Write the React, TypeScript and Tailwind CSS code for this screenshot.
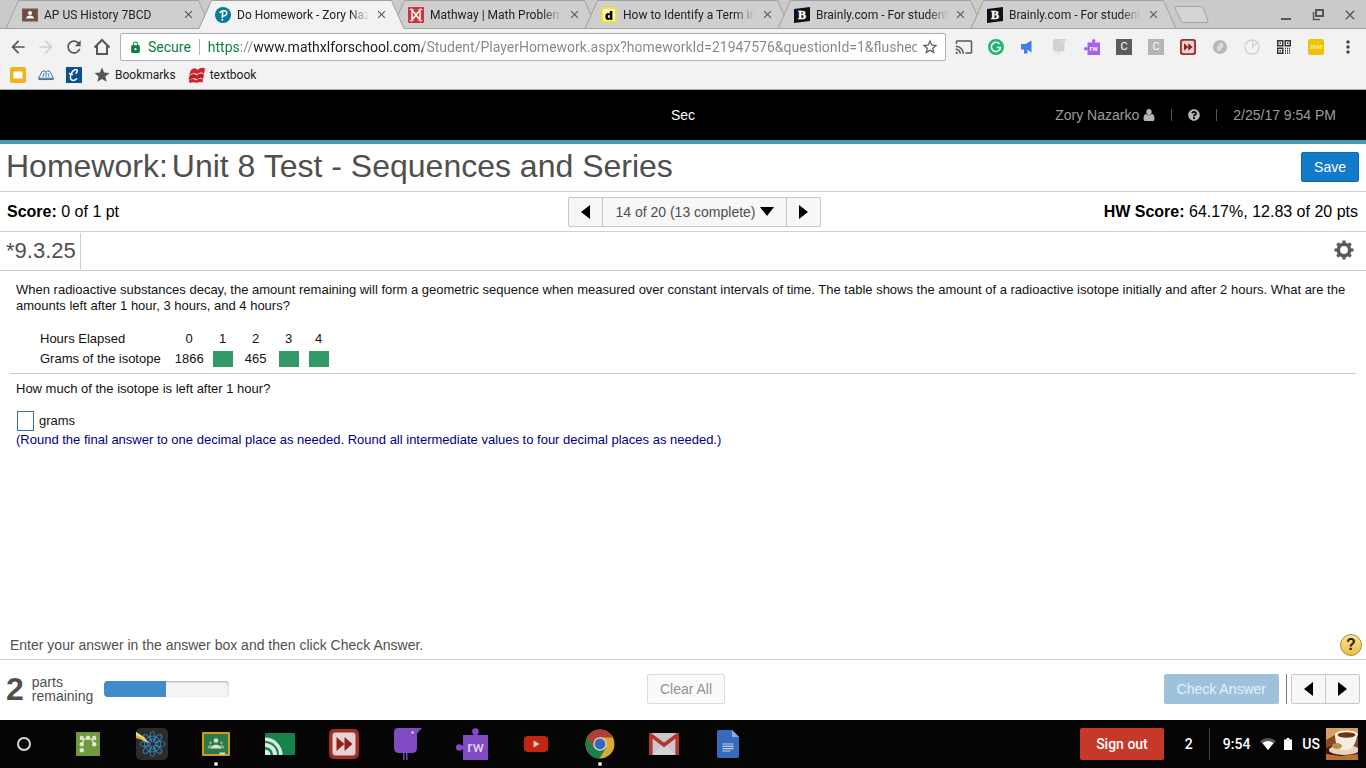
import React, { useState } from 'react';
import {
    MdArrowBack,
    MdArrowForward,
    MdCast,
    MdClose,
    MdLock,
    MdMoreVert,
    MdRefresh,
    MdStar,
    MdStarBorder,
} from 'react-icons/md';
import { FaQuestionCircle } from 'react-icons/fa';

interface Tab {
    id: number;
    title: string;
    icon: React.ReactNode;
}

interface IconItem {
    label: string;
    icon: React.ReactNode;
    running?: boolean;
}

/* ---------- favicons ---------- */

const ClassIcon = () => (
    <svg viewBox="0 0 16 16" className="size-4">
        <rect x="0" y="1.5" width="16" height="13" fill="#795548" />
        <rect x="1.5" y="3" width="13" height="10" fill="#6d4c41" />
        <circle cx="8" cy="6" r="2" fill="#fff" />
        <path d="M4 11.5c0-4 8-4 8 0z" fill="#fff" />
    </svg>
);

const PearsonIcon = () => (
    <svg viewBox="0 0 16 16" className="size-4">
        <circle cx="8" cy="8" r="8" fill="#047a9c" />
        <path d="M4.8 6c1.2-3 7-3.200 7-.2 0 2.500-2.600 3.600-4.400 3" fill="none" stroke="#fff" strokeWidth="1.500" />
        <path d="M7.600 4.500l-.3 6.500" fill="none" stroke="#fff" strokeWidth="1.600" />
        <circle cx="7.300" cy="12.700" r="1" fill="#fff" />
    </svg>
);

const MathwayIcon = () => (
    <svg viewBox="0 0 16 16" className="size-4">
        <rect width="16" height="16" rx="1" fill="#d0343c" />
        <path d="M4 13V3l4 5 4-5v10L8 8z" fill="none" stroke="#fff" strokeWidth="1.500" />
        <path d="M1.500 2.500h4M10.500 2.500h4M1.500 13.500h4M10.500 13.500h4" stroke="#f5c9cb" strokeWidth="1" />
    </svg>
);

const DummiesIcon = () => (
    <span className="flex size-4 items-center justify-center rounded-xs border-2 border-[#efe23c] bg-[#fdf9b8] font-['Open_Sans'] text-[13px]/[12px] font-extrabold text-black">
        d
    </span>
);

const BrainlyIcon = () => (
    <svg viewBox="0 0 16 16" className="size-4">
        <path d="M0 2l16-2v14L0 16z" fill="#111" />
        <text x="8" y="12.300" textAnchor="middle" fontSize="12" fontWeight="700" fontFamily="Liberation Serif" fill="#fff" stroke="#fff" strokeWidth=".4">B</text>
    </svg>
);

/* ---------- toolbar icons ---------- */

const HomeIcon = () => (
    <svg viewBox="0 0 18 18" className="size-[18px]" fill="none" stroke="#555" strokeWidth="2">
        <path d="M1.500 9.500L9 2l7.500 7.500M4 8v8h10V8" strokeLinejoin="miter" />
    </svg>
);

const FastForwardIcon = ({ className }: { className: string }) => (
    <svg viewBox="0 0 30 30" className={className}>
        <rect width="30" height="30" rx="5" fill="#a32c27" />
        <rect x="3.500" y="3.500" width="23" height="23" rx="3" fill="#e2d5d4" />
        <path d="M7.500 8l8 7-8 7zM15.500 8l8 7-8 7z" fill="#93201c" />
    </svg>
);

const PuzzleIcon = ({ className, fill, text }: { className: string; fill: string; text: string }) => (
    <svg viewBox="0 0 32 32" className={className} fill={fill}>
        <rect x="7" y="7" width="25" height="25" />
        <circle cx="19.500" cy="3.500" r="3.300" />
        <rect x="17.500" y="4" width="4" height="5" />
        <circle cx="3.300" cy="19.500" r="3.300" />
        <rect x="4" y="17.500" width="5" height="4" />
        <text x="19.500" y="23.500" textAnchor="middle" fontSize="15" fontWeight="500" fontFamily="Roboto" fill={text}>rw</text>
    </svg>
);

const BirdIcon = ({ className, fill }: { className: string; fill: string }) => (
    <svg viewBox="0 0 32 32" className={className} fill={fill}>
        <path d="M6 0h24l-5 5.500V20q0 5-5 5H7q-5 0-5-5V4Q2 0 6 0z" />
        <path d="M11.800 25v7M14.800 25v7" stroke={fill} strokeWidth="1.400" />
        <circle cx="20.500" cy="4.500" r="1.300" fill="#fff" opacity=".75" />
    </svg>
);

const QrIcon = () => (
    <svg viewBox="0 0 14 14" className="size-3.5" fill="none" stroke="#333" strokeWidth="1.500">
        <rect x=".75" y=".75" width="5" height="5" />
        <rect x="8.250" y=".75" width="5" height="5" />
        <rect x=".75" y="8.250" width="5" height="5" />
        <path d="M2.500 3.250h1.500M10 3.250h1.500M2.500 10.750h1.500" />
        <path d="M8 8.500h6M8 10.750h6M8 13h6" strokeDasharray="1 1" />
    </svg>
);

const LetterIcon = ({ className }: { className: string }) => (
    <span className={`flex size-4 items-center justify-center text-[11px] text-white ${className}`}>C</span>
);

const UserIcon = () => (
    <svg viewBox="0 0 12 12" className="size-3" fill="#b5b5b5">
        <ellipse cx="6" cy="3" rx="2.700" ry="3" />
        <path d="M3 5q3 2.500 6 0 2.500.500 2.500 5 0 2-1.500 2H2Q.500 12 .500 10 .500 5.500 3 5z" />
    </svg>
);

const EXTENSIONS: IconItem[] = [
    { label: 'Cast', icon: <MdCast size={18} color="#5a5a5a" /> },
    {
        label: 'Grammarly',
        icon: (
            <svg viewBox="0 0 16 16" className="size-4">
                <circle cx="8" cy="8" r="8" fill="#21b573" />
                <path d="M11.500 5A4.600 4.600 0 1 0 12.500 8.500H9" fill="none" stroke="#fff" strokeWidth="1.500" />
                <path d="M12 8v3" stroke="#fff" strokeWidth="1.300" />
            </svg>
        ),
    },
    {
        label: 'Announce',
        icon: (
            <svg viewBox="0 0 16 16" className="size-4" fill="#3f7fe8">
                <path d="M1 5h4.500L11.500 1.500v12L7.500 10.500v4H4V10.500H1z" />
            </svg>
        ),
    },
    { label: 'Bird', icon: <BirdIcon className="size-4" fill="#d2d2d2" /> },
    { label: 'Read and write', icon: <PuzzleIcon className="size-4" fill="#a561ef" text="#fff" /> },
    { label: 'Clever', icon: <LetterIcon className="bg-[#5c5c5c]" /> },
    { label: 'Clip', icon: <LetterIcon className="bg-[#b5b5b5]" /> },
    { label: 'Skip ads', icon: <FastForwardIcon className="size-4" /> },
    {
        label: 'Leaf',
        icon: (
            <svg viewBox="0 0 16 16" className="size-4">
                <circle cx="8" cy="8" r="7" fill="#b8b8b8" />
                <path d="M5 9l4-5 2 2-4 6zM7 12l4-5" fill="#d8d8d8" stroke="#e3e3e3" />
            </svg>
        ),
    },
    {
        label: 'Timer',
        icon: (
            <svg viewBox="0 0 16 16" className="size-4" fill="none" stroke="#cfcfcf">
                <circle cx="8" cy="8" r="7" strokeWidth="1.300" />
                <path d="M8.500 1.500V8l4.500-4.500" strokeWidth="1.200" />
            </svg>
        ),
    },
    { label: 'QR code', icon: <QrIcon /> },
    {
        label: '2048',
        icon: (
            <span className="flex size-4 items-center justify-center rounded-xs bg-[#ecc30b] font-[Roboto]">
                <svg viewBox="0 0 16 16" className="size-4">
                    <text x="8" y="10" textAnchor="middle" fontSize="5.500" fontWeight="700" fill="#fbeea6">2048</text>
                </svg>
            </span>
        ),
    },
];

/* ---------- shelf icons ---------- */

const SHELF: IconItem[] = [
    {
        label: 'Desmos',
        icon: (
            <svg viewBox="0 0 24 24" className="size-6">
                <rect width="24" height="24" rx="1" fill="#6f9a3c" />
                <path d="M5.800 12.200Q8 6 12 5.800q4 .2 6.200 6.400" fill="none" stroke="#dfe6d3" strokeWidth="1.300" />
                <g fill="#dfe6d3">
                    <circle cx="5.800" cy="6" r="2.200" />
                    <circle cx="12" cy="5.800" r="2.200" />
                    <circle cx="18.200" cy="6" r="2.200" />
                    <circle cx="5.800" cy="12.200" r="2.200" />
                    <circle cx="18.200" cy="12.200" r="2.200" />
                    <circle cx="5.800" cy="18.300" r="2.200" />
                </g>
            </svg>
        ),
    },
    {
        label: 'Sketch',
        icon: (
            <svg viewBox="0 0 32 32" className="size-8">
                <rect width="32" height="32" rx="5" fill="#2c2c2c" />
                <g fill="none" stroke="#3585b8" strokeWidth="1">
                    <ellipse cx="16.500" cy="8.500" rx="2.500" ry="5" />
                    <ellipse cx="16.500" cy="8.500" rx="2.500" ry="5" transform="rotate(45 16.500 16)" />
                    <ellipse cx="16.500" cy="8.500" rx="2.500" ry="5" transform="rotate(90 16.500 16)" />
                    <ellipse cx="16.500" cy="8.500" rx="2.500" ry="5" transform="rotate(135 16.500 16)" />
                    <ellipse cx="16.500" cy="8.500" rx="2.500" ry="5" transform="rotate(180 16.500 16)" />
                    <ellipse cx="16.500" cy="8.500" rx="2.500" ry="5" transform="rotate(225 16.500 16)" />
                    <ellipse cx="16.500" cy="8.500" rx="2.500" ry="5" transform="rotate(270 16.500 16)" />
                    <ellipse cx="16.500" cy="8.500" rx="2.500" ry="5" transform="rotate(315 16.500 16)" />
                    <circle cx="16.500" cy="16" r="8" />
                    <circle cx="16.500" cy="16" r="5" />
                </g>
                <path d="M0 4l8 5 4.500 6L6 12l-6-2z" fill="#e0b52c" />
                <path d="M0 4l9 6-1 1-8-4z" fill="#f1dc84" />
                <path d="M8 9l4.500 6L7 12.500z" fill="#d8c5a5" />
            </svg>
        ),
    },
    {
        label: 'Classroom',
        running: true,
        icon: (
            <svg viewBox="0 0 30 26" className="h-[26px] w-[30px]">
                <rect x="1" y="1" width="28" height="24" rx="1" fill="#d09c1e" />
                <rect x="3" y="3" width="24" height="20" fill="#2e7b46" />
                <g fill="#d8e2d9">
                    <circle cx="9.500" cy="12" r="1.400" opacity=".5" />
                    <circle cx="20.500" cy="12" r="1.400" opacity=".5" />
                    <path d="M6.500 17.500c0-4 4-4 4-3v3zM23.500 17.500c0-4-4-4-4-3v3z" opacity=".5" />
                    <circle cx="15" cy="9.500" r="2.300" />
                    <path d="M10 17.500c0-5 10-5 10 0z" />
                    <rect x="18.500" y="21.500" width="5.500" height="2" />
                </g>
            </svg>
        ),
    },
    {
        label: 'Cast',
        icon: (
            <svg viewBox="0 0 30 22" className="h-[22px] w-[30px]">
                <rect width="30" height="22" rx="1" fill="#15844b" />
                <path d="M0 4.500A17.500 17.500 0 0 1 17.500 22H0z" fill="#dfe8e3" />
                <path d="M0 8A14 14 0 0 1 14 22H0z" fill="#15844b" />
                <path d="M0 10A12 12 0 0 1 12 22H0z" fill="#dfe8e3" />
                <path d="M0 14A8 8 0 0 1 8 22H0z" fill="#15844b" />
                <path d="M0 16.500A5.500 5.500 0 0 1 5.500 22H0z" fill="#dfe8e3" />
            </svg>
        ),
    },
    { label: 'Skip ads', icon: <FastForwardIcon className="size-[30px]" /> },
    { label: 'Bird', icon: <BirdIcon className="size-8" fill="#804ac2" /> },
    { label: 'Read and write', icon: <PuzzleIcon className="size-8" fill="#804ac2" text="#dccdf0" /> },
    {
        label: 'YouTube',
        icon: (
            <svg viewBox="0 0 24 18" className="h-[18px] w-6">
                <rect y="1" width="24" height="16" rx="4" fill="#c02612" />
                <path d="M9.500 5.500l6 3.500-6 3.500z" fill="#e5d0cd" />
            </svg>
        ),
    },
    {
        label: 'Chrome',
        running: true,
        icon: (
            <svg viewBox="0 0 30 30" className="size-[30px]">
                <circle cx="15" cy="15" r="14.500" fill="#d9ab32" />
                <path d="M15 15L8.500 18.700 2.400 8A14.500 14.500 0 0 1 27.700 8.500H15z" fill="#b33c33" />
                <path d="M2.400 8A14.500 14.500 0 0 0 14.500 29.500L21 18.700 15 15 8.700 18.700z" fill="#1d7f49" />
                <circle cx="15" cy="15" r="6.700" fill="#d6d9dc" />
                <circle cx="15" cy="15" r="5.400" fill="#3567c0" />
            </svg>
        ),
    },
    {
        label: 'Gmail',
        icon: (
            <svg viewBox="0 0 30 22" className="h-[22px] w-[30px]">
                <rect width="30" height="22" rx="1.500" fill="#c9c9c9" />
                <path d="M3 21.500l9-9.500 3 2.500 3-2.500 9 9.500" fill="#d6d6d6" stroke="#b8b8b8" strokeWidth=".700" />
                <path d="M1.800 22V2L15 12 28.200 2v20" fill="none" stroke="#b3362e" strokeWidth="3.600" />
            </svg>
        ),
    },
    {
        label: 'Docs',
        icon: (
            <svg viewBox="0 0 22 28" className="h-7 w-[22px]">
                <path d="M2 0h13l7 7v19q0 2-2 2H2q-2 0-2-2V2Q0 0 2 0z" fill="#3769bd" />
                <path d="M15 0l7 7h-7z" fill="#93addb" />
                <path d="M5.500 14h11M5.500 16.300h11M5.500 18.600h11M5.500 21h8" stroke="#c5d1e8" strokeWidth="1.200" />
            </svg>
        ),
    },
];

const TABS: Tab[] = [
    { id: 1, title: 'AP US History 7BCD', icon: <ClassIcon /> },
    { id: 2, title: 'Do Homework - Zory Nazarko', icon: <PearsonIcon /> },
    { id: 3, title: 'Mathway | Math Problem Solver', icon: <MathwayIcon /> },
    { id: 4, title: 'How to Identify a Term in a', icon: <DummiesIcon /> },
    { id: 5, title: 'Brainly.com - For students. By', icon: <BrainlyIcon /> },
    { id: 6, title: 'Brainly.com - For students. By', icon: <BrainlyIcon /> },
];

const HOURS = ['0', '1', '2', '3', '4'];
const GRAMS = ['1866', null, '465', null, null];

const BrowserTab = ({ tab, active, onSelect }: { tab: Tab; active: boolean; onSelect: () => void }) => (
    <div className={`-mr-3 grid w-[205px] min-w-0 grid-cols-[minmax(0,1fr)] ${active ? 'z-10' : ''}`}>
        <svg viewBox="0 0 205 29" preserveAspectRatio="none" className="col-start-1 row-start-1 h-[29px] w-full">
            <path d="M0 29L12.500.500h180L205 29z" fill={active ? '#f2f2f2' : '#cfcfcf'} />
            <path
                d={active ? 'M0 28.500L12.500.500h180L205 28.500' : 'M0 28.500L12.500.500h180L205 28.500z'}
                fill="none"
                stroke="#a0a0a0"
            />
        </svg>
        <div className="z-10 col-start-1 row-start-1 flex items-center pr-4 pl-4">
            <button onClick={onSelect} className="flex min-w-0 flex-1 items-center gap-1.5">
                <span className="shrink-0">{tab.icon}</span>
                <span className="flex-1 overflow-hidden mask-r-from-85% text-left whitespace-nowrap">{tab.title}</span>
            </button>
            <button aria-label="Close tab" className="ml-1.5">
                <MdClose size={13} color="#555" />
            </button>
        </div>
    </div>
);

const LeftArrow = () => (
    <svg viewBox="0 0 9 14" className="h-3.5 w-[9px]"><path d="M9 0v14L0 7z" /></svg>
);

const RightArrow = () => (
    <svg viewBox="0 0 9 14" className="h-3.5 w-[9px]"><path d="M0 0v14l9-7z" /></svg>
);

const App: React.FC = () => {
    const [activeTab, setActiveTab] = useState(2);
    const [answer, setAnswer] = useState('');
    const [url, setUrl] = useState(
        'https://www.mathxlforschool.com/Student/PlayerHomework.aspx?homeworkId=21947576&questionId=1&flushed=false'
    );

    return (
        <div className="flex min-h-screen flex-col bg-white font-['Liberation_Sans',sans-serif] text-sm text-[#4f4f4f]">
            {/* Browser chrome */}
            <div className="border-b border-[#a9a9a9] bg-[#f2f2f2] font-[Roboto,sans-serif] text-xs text-[#222]">
                <div className="flex h-[29px] items-center bg-[linear-gradient(#cacaca_0_28px,#a0a0a0_28px)] pl-1.5">
                    {TABS.map(tab => (
                        <BrowserTab
                            key={tab.id}
                            tab={tab}
                            active={tab.id === activeTab}
                            onSelect={() => setActiveTab(tab.id)}
                        />
                    ))}
                    <button aria-label="New tab" className="ml-2.5">
                        <svg viewBox="0 0 35 17" className="h-[17px] w-[35px]" fill="#d4d4d4" stroke="#a3a3a3">
                            <path d="M2 .500h25q1.500 0 2 1.500l5 13q.500 1.500-1 1.500H9q-1.500 0-2-1.500L1 2Q.500.500 2 .500z" />
                        </svg>
                    </button>
                    <div className="ml-auto flex items-center gap-4 pr-2">
                        <button aria-label="Minimize">
                            <svg viewBox="0 0 16 16" className="size-4"><path d="M3 12h10" stroke="#555" strokeWidth="2" /></svg>
                        </button>
                        <button aria-label="Restore">
                            <svg viewBox="0 0 16 16" className="size-4" fill="none" stroke="#555" strokeWidth="1.500">
                                <rect x="6" y="3" width="7" height="6" strokeWidth="2" />
                                <path d="M3.500 5v7.500H10" />
                            </svg>
                        </button>
                        <button aria-label="Close window"><MdClose size={16} color="#555" /></button>
                    </div>
                </div>

                <div className="flex h-9 items-center pl-2">
                    <div className="flex items-center gap-2 pr-2 text-[#555]">
                        <button aria-label="Back"><MdArrowBack size={20} /></button>
                        <button aria-label="Forward"><MdArrowForward size={20} color="#d0d0d0" /></button>
                        <button aria-label="Reload"><MdRefresh size={20} /></button>
                        <button aria-label="Home" className="px-px"><HomeIcon /></button>
                    </div>
                    <div className="flex h-7 min-w-0 flex-1 items-center rounded-xs border border-[#b0b0b0] bg-white pr-1.5 pl-2 text-sm">
                        <MdLock size={13} color="#0b8043" />
                        <label htmlFor="url" className="pl-1.5 text-[#0b8043]">Secure</label>
                        <span className="mx-2 h-4 w-px bg-[#b5b5b5]" />
                        <input
                            id="url"
                            value={url}
                            onChange={e => setUrl(e.target.value)}
                            className="min-w-0 flex-1 bg-[linear-gradient(90deg,#0b8043_0_32px,#868686_32px_46px,#1c1c1c_46px_215px,#868686_215px)] bg-clip-text text-transparent caret-black outline-none"
                        />
                        <button aria-label="Bookmark this page" className="pl-1"><MdStarBorder size={18} color="#555" /></button>
                    </div>
                    <div className="flex items-center gap-4 pr-2.5 pl-2.5">
                        {EXTENSIONS.map(ext => (
                            <button key={ext.label} aria-label={ext.label} className="flex size-4 items-center justify-center">
                                <span className="shrink-0">{ext.icon}</span>
                            </button>
                        ))}
                        <button aria-label="Menu" className="flex size-4 items-center justify-center">
                            <MdMoreVert size={20} color="#444" className="shrink-0" />
                        </button>
                    </div>
                </div>

                <div className="flex h-6 items-center gap-3 pb-1 pl-2.5">
                    <a href="#" aria-label="Slides">
                        <svg viewBox="0 0 16 16" className="size-4">
                            <rect width="16" height="16" rx="2" fill="#efb41d" />
                            <rect x="3.500" y="4.500" width="9" height="7" fill="#fff" />
                        </svg>
                    </a>
                    <a href="#" aria-label="Library">
                        <svg viewBox="0 0 16 16" className="size-4" fill="#eef3f7" stroke="#46779f">
                            <path d="M4 4.500Q6.500 3 8 5q1.500-2 4-.500l3.500 7q-5-1-7.500.500-2.500-1.500-7.500-.500z" />
                            <path d="M.500 12.300h15" strokeWidth="1.500" />
                            <path d="M8 5v6.500M6 6l-1 4M10 6l1 4" strokeWidth=".900" />
                        </svg>
                    </a>
                    <a href="#" aria-label="Campus">
                        <svg viewBox="0 0 16 16" className="size-4">
                            <rect width="16" height="16" fill="#0b4f8f" />
                            <path d="M9.500 6.500c2-1 2.500-4 .500-4C6.500 2.500 4 8 4.500 11c.500 3.500 4.500 2.800 6.500.5M3 6q1 2 4 1.500" fill="none" stroke="#fff" strokeWidth="1.500" />
                        </svg>
                    </a>
                    <a href="#" className="flex items-center gap-1">
                        <MdStar size={18} color="#555" className="-ml-px" />
                        Bookmarks
                    </a>
                    <a href="#" className="flex items-center gap-1">
                        <svg viewBox="0 0 18 16" className="h-4 w-[18px]" fill="#d2232a">
                            <path d="M3 3Q7-.500 9.500 3 13-.500 17 1.500L16 7Q12 4 9.500 7.500 6.500 5 1 8z" />
                            <path d="M1.500 8.500Q6 5.500 9 8.500 12 5 16 7.500l-1 4.500Q12 9.500 9 12.500 6 10 .500 13z" fill="#b81d24" />
                            <path d="M1 13q4-2 7 .500 3.500-3.500 7-1l-.500 3q-3.500-1-6 .500-3-1.500-7 0z" />
                        </svg>
                        textbook
                    </a>
                </div>
            </div>

            {/* Site header */}
            <header className="grid h-[54px] grid-cols-3 items-center border-b-4 border-[#4a9ab8] bg-black text-[#9c9c9c]">
                <span className="col-start-2 text-center text-white">Sec</span>
                <div className="flex items-center justify-end gap-4 pr-[30px]">
                    <a href="#" className="flex items-center gap-1">Zory Nazarko <UserIcon /></a>
                    <span className="h-3 w-px bg-[#555]" />
                    <a href="#" aria-label="Help"><FaQuestionCircle size={12} color="#b5b5b5" /></a>
                    <span className="h-3 w-px bg-[#555]" />
                    <span>2/25/17 9:54 PM</span>
                </div>
            </header>

            {/* Assignment title */}
            <div className="flex h-12 items-center justify-between border-b border-[#c7d0d5] pr-[7px] pb-0.5 pl-1.5">
                <h1 className="flex gap-1 pb-0.5 text-[32px]/[42px]">
                    <span>Homework:</span>
                    <span>Unit 8 Test - Sequences and Series</span>
                </h1>
                <button className="h-[30px] rounded-xs border border-[#1068ad] bg-[#117ac9] px-3 text-white">Save</button>
            </div>

            {/* Score row */}
            <div className="grid h-10 grid-cols-[1fr_auto_1fr] items-center border-b border-[#c7d0d5] pr-2 pl-[7px]">
                <p className="text-base text-black"><b>Score:</b> 0 of 1 pt</p>
                <div className="ml-6 flex h-[30px] rounded-xs border border-[#c8c8c8] bg-[#f7f7f7]">
                    <button aria-label="Previous question" className="px-3"><LeftArrow /></button>
                    <button className="flex items-center gap-1 border-x border-[#c8c8c8] px-3">
                        14 of 20 (13 complete)
                        <svg viewBox="0 0 14 9" className="h-[9px] w-3.5"><path d="M0 0h14L7 9z" /></svg>
                    </button>
                    <button aria-label="Next question" className="px-3"><RightArrow /></button>
                </div>
                <p className="text-right text-base text-black"><b>HW Score:</b> 64.17%, 12.83 of 20 pts</p>
            </div>

            {/* Exercise number */}
            <div className="flex h-[39px] items-center justify-between border-b border-[#c7d0d5] pr-3 pl-1.5">
                <h2 className="h-9 border-r border-[#c7d0d5] pr-1 text-[22px]/[36px]">*9.3.25</h2>
                <button aria-label="Settings" className="pb-0.5">
                    <svg viewBox="0 0 20 20" className="size-5">
                        <circle cx="10" cy="10" r="5.700" fill="none" stroke="#5a5a5a" strokeWidth="3.600" />
                        <path
                            d="M10 .500v3M10 16.500v3M.500 10h3M16.500 10h3M3.300 3.300l2 2M14.700 14.700l2 2M3.300 16.700l2-2M14.700 5.300l2-2"
                            stroke="#5a5a5a"
                            strokeWidth="3.200"
                        />
                    </svg>
                </button>
            </div>

            {/* Question */}
            <main className="flex-1 px-2.5 pt-[11px] text-[13px]/[16px] text-[#111]">
                <p className="pl-1.5">
                    When radioactive substances decay, the amount remaining will form a geometric sequence when measured over
                    constant intervals of time. The table shows the amount of a radioactive isotope initially and after 2
                    hours. What are the amounts left after 1 hour, 3 hours, and 4 hours?
                </p>
                <table className="mt-[15px] ml-[30px] text-center">
                    <colgroup>
                        <col />
                        <col className="w-[37px]" />
                        <col className="w-[30px]" />
                        <col className="w-9" />
                        <col className="w-[30px]" />
                        <col className="w-[30px]" />
                    </colgroup>
                    <tbody>
                        <tr className="h-5">
                            <th scope="row" className="pr-2.5 text-left font-normal">Hours Elapsed</th>
                            {HOURS.map(hour => <td key={hour}>{hour}</td>)}
                        </tr>
                        <tr className="h-5">
                            <th scope="row" className="pr-2.5 text-left font-normal">Grams of the isotope</th>
                            {GRAMS.map((grams, index) => (
                                <td key={index}>
                                    {grams ?? <span className="mx-auto block h-4 w-5 bg-[#339966]" />}
                                </td>
                            ))}
                        </tr>
                    </tbody>
                </table>
                <hr className="mt-1 border-[#c9c9c9]" />
                <div className="pl-1.5">
                    <p className="pt-[7px]">How much of the isotope is left after 1 hour?</p>
                    <label className="mt-3.5 flex items-center gap-[5px]">
                        <input
                            value={answer}
                            onChange={e => setAnswer(e.target.value)}
                            className="ml-px h-5 w-[17px] border border-[#3b6ea5] px-px outline-none"
                        />
                        grams
                    </label>
                    <p className="pt-px text-[#000080]">
                        (Round the final answer to one decimal place as needed. Round all intermediate values to four decimal
                        places as needed.)
                    </p>
                </div>
            </main>

            <div className="flex items-center justify-between border-b border-[#c7d0d5] pr-1 pb-[3px] pl-2.5">
                <p>Enter your answer in the answer box and then click Check Answer.</p>
                <button
                    aria-label="Help"
                    className="size-[22px] rounded-full border border-[#b08b3c] bg-linear-to-b from-[#fbe28a] to-[#eebd4c] text-base/[20px] font-bold text-[#222]"
                >
                    ?
                </button>
            </div>

            {/* Answer controls */}
            <footer className="grid h-[60px] grid-cols-[1fr_auto_1fr] items-center px-1.5 pb-0.5">
                <div className="flex items-center">
                    <span className="text-[32px]/[32px] font-bold">2</span>
                    <span className="w-20 pl-2 leading-[14px]">parts remaining</span>
                    <div className="h-4 w-[125px] overflow-hidden rounded-sm bg-[#f4f4f4] shadow-[inset_0_1px_2px_#aaa]">
                        <div className="h-full w-1/2 bg-[#428bca]" />
                    </div>
                </div>
                <button className="ml-1.5 h-[30px] rounded-xs border border-[#dcdcdc] bg-[#fafafa] px-3 text-[#939393]">Clear All</button>
                <div className="flex items-center justify-end">
                    <button className="h-[30px] rounded-xs bg-[#9fc2dc] px-[13px] text-[#e6f0f7]">Check Answer</button>
                    <span className="mr-1 ml-[7px] h-[30px] w-px bg-[#777]" />
                    <div className="flex h-[30px] w-[69px] rounded-xs border border-[#c8c8c8] bg-[#f7f7f7]">
                        <button aria-label="Previous part" className="flex flex-1 items-center justify-center"><LeftArrow /></button>
                        <button aria-label="Next part" className="flex flex-1 items-center justify-center border-l border-[#c8c8c8]"><RightArrow /></button>
                    </div>
                </div>
            </footer>

            {/* Shelf */}
            <nav className="flex h-12 items-center bg-[#050505] pl-2 font-[Roboto,sans-serif] font-medium text-white">
                <button aria-label="Launcher" className="mr-4 flex w-8 justify-center">
                    <span className="size-3.5 rounded-full border-2 border-[#d8d8d8]" />
                </button>
                {SHELF.map(app => (
                    <button key={app.label} aria-label={app.label} className="grid h-12 w-16 place-items-center">
                        <span className="col-start-1 row-start-1">{app.icon}</span>
                        {app.running && (
                            <span className="col-start-1 row-start-1 mb-0.5 size-1 self-end rounded-full bg-[#ddd]" />
                        )}
                    </button>
                ))}
                <div className="ml-auto flex items-center pr-2">
                    <button className="h-8 rounded-xs bg-[#c53929] px-4">Sign out</button>
                    <span className="w-[45px] pl-[21px]">2</span>
                    <span className="h-8 w-px bg-[#444]" />
                    <span className="pr-2.5 pl-[13px]">9:54</span>
                    <svg viewBox="0 0 16 12" className="mr-2 h-3 w-4">
                        <path d="M0 3Q8-3 16 3L8 12z" fill="#555" />
                        <path d="M2.500 5Q8 1 13.500 5L8 12z" fill="#fff" />
                    </svg>
                    <svg viewBox="0 0 8 12" className="mr-2.5 h-3 w-2"><path d="M2.500 0h3v1.500H8V12H0V1.500h2.500z" fill="#fff" /></svg>
                    <span>US</span>
                    <svg viewBox="0 0 32 32" className="ml-1.5 size-8">
                        <rect width="32" height="32" fill="#8a4a1e" />
                        <path d="M0 0h32v6L14 4 0 12z" fill="#d9a066" />
                        <path d="M0 20q12-6 32 4v8H0z" fill="#4a1408" />
                        <path d="M0 26l14 2 18-2v6H0z" fill="#b9722f" />
                        <ellipse cx="18" cy="22" rx="15" ry="5" fill="#e9d5bd" />
                        <path d="M9 6q0 15 9 16 11 0 13-14z" fill="#f6ece0" />
                        <ellipse cx="20.500" cy="6.500" rx="11.500" ry="4" fill="#fff8ee" />
                        <ellipse cx="20.500" cy="7" rx="9" ry="2.700" fill="#6d3517" />
                        <ellipse cx="11" cy="18" rx="5" ry="3" fill="#bd8a4a" />
                    </svg>
                </div>
            </nav>
        </div>
    );
};

export default App;
